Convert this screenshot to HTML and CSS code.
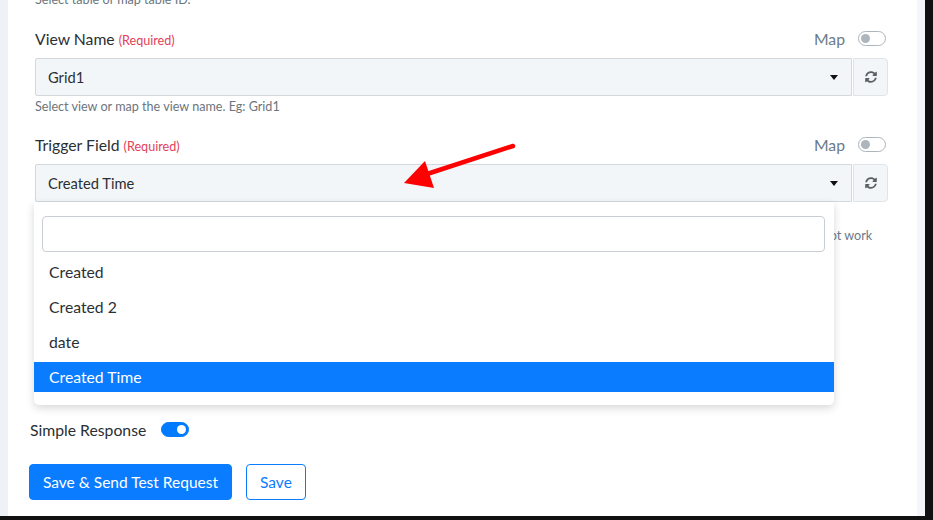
FILE: index.html
```html
<!DOCTYPE html>
<html lang="en">
<head>
  <meta charset="UTF-8" />
  <meta name="viewport" content="width=device-width, initial-scale=1.0"/>
  <title>Trigger Settings</title>
  <link rel="stylesheet" href="styles.css" />
</head>
<body>
  <div class="screen">
    <main class="panel">
      <p class="help help-top">Select table or map table ID.</p>

      <div class="fields">
        <!-- View name -->
        <div class="field">
          <div class="field-head">
            <label>View Name <span class="req">(Required)</span></label>
            <div class="map"><span>Map</span><span class="switch"></span></div>
          </div>
          <div class="select-row">
            <div class="select"><span>Grid1</span><span class="caret"></span></div>
            <button class="refresh" type="button">
              <svg viewBox="0 0 512 512" width="12" height="12"><path d="M370.72 133.28C339.458 104.008 298.888 87.962 255.848 88c-77.458.068-144.328 53.178-162.791 126.85-1.344 5.363-6.122 9.15-11.651 9.15H24.103c-7.498 0-13.194-6.807-11.807-14.176C33.933 94.924 134.813 8 256 8c66.448 0 126.791 26.136 171.315 68.685L463.03 40.97C478.149 25.851 504 36.559 504 57.941V192c0 13.255-10.745 24-24 24H345.941c-21.382 0-32.09-25.851-16.971-40.971l41.75-41.749zM32 296h134.059c21.382 0 32.090 25.851 16.971 40.971l-41.75 41.750c31.262 29.273 71.835 45.319 114.876 45.28 77.418-.07 144.315-53.144 162.787-126.849 1.344-5.363 6.122-9.15 11.651-9.15h57.304c7.498 0 13.194 6.807 11.807 14.176C478.067 417.076 377.187 504 256 504c-66.448 0-126.791-26.136-171.315-68.685L48.970 471.030C33.851 486.149 8 475.441 8 454.059V320c0-13.255 10.745-24 24-24z"/></svg>
            </button>
          </div>
          <p class="help">Select view or map the view name. Eg: Grid1</p>
        </div>

        <!-- Trigger field, list opened -->
        <div class="field field-next">
          <div class="field-head">
            <label>Trigger Field <span class="req">(Required)</span></label>
            <div class="map"><span>Map</span><span class="switch"></span></div>
          </div>
          <div class="select-row">
            <div class="select"><span>Created Time</span><span class="caret"></span></div>
            <button class="refresh" type="button">
              <svg viewBox="0 0 512 512" width="12" height="12"><path d="M370.72 133.28C339.458 104.008 298.888 87.962 255.848 88c-77.458.068-144.328 53.178-162.791 126.85-1.344 5.363-6.122 9.15-11.651 9.15H24.103c-7.498 0-13.194-6.807-11.807-14.176C33.933 94.924 134.813 8 256 8c66.448 0 126.791 26.136 171.315 68.685L463.03 40.97C478.149 25.851 504 36.559 504 57.941V192c0 13.255-10.745 24-24 24H345.941c-21.382 0-32.09-25.851-16.971-40.971l41.75-41.749zM32 296h134.059c21.382 0 32.090 25.851 16.971 40.971l-41.75 41.750c31.262 29.273 71.835 45.319 114.876 45.28 77.418-.07 144.315-53.144 162.787-126.849 1.344-5.363 6.122-9.15 11.651-9.15h57.304c7.498 0 13.194 6.807 11.807 14.176C478.067 417.076 377.187 504 256 504c-66.448 0-126.791-26.136-171.315-68.685L48.970 471.030C33.851 486.149 8 475.441 8 454.059V320c0-13.255 10.745-24 24-24z"/></svg>
            </button>

            <div class="dropdown">
              <input class="dropdown-search" type="text" />
              <ul class="options">
                <li>Created</li>
                <li>Created 2</li>
                <li>date</li>
                <li class="active">Created Time</li>
              </ul>
            </div>
          </div>
          <p class="help help-note">Select the date field to find new records. Only records with a date value in this field are picked, records without a value will not trigger, so it will not work</p>
        </div>
      </div>

      <div class="simple-row">
        <span>Simple Response</span>
        <span class="switch on"></span>
      </div>

      <div class="actions">
        <button class="btn btn-primary" type="button">Save &amp; Send Test Request</button>
        <button class="btn btn-outline" type="button">Save</button>
      </div>
    </main>
  </div>

  <!-- red pointer over the trigger field -->
  <svg class="pointer-arrow" width="933" height="520" viewBox="0 0 933 520">
    <line x1="513" y1="146" x2="424" y2="175" stroke="#ff0000" stroke-width="4.5" stroke-linecap="round" />
    <polygon points="404,183 425,161 434,188" fill="#ff0000" />
  </svg>
</body>
</html>
```

FILE: styles.css
```css
/* =====================
  Base
====================== */

body {
  margin: 0;
  background-color: #111; /* dark frame around the app */
  font-family: Lato, "Open Sans", sans-serif;
  color: #2b2f33;
  overflow: hidden;
}

.screen {
  width: 925px;
  height: 516px;
  padding: 0 8px;
  box-sizing: border-box;
  background: linear-gradient(to right, #eef1f5, #f4f6f9);
}

.panel {
  height: 100%;
  box-sizing: border-box;
  background-color: #fff;
  padding: 0 29px 0 22px;
  display: flex;
  flex-direction: column;
}

.fields {
  padding-left: 5px;
}

/* =====================
  Texts
====================== */

.help {
  margin: 3px 0 0;
  font-size: 12.6px;
  line-height: 16px;
  color: #6c757d;
  white-space: nowrap;
}

.help-top {
  margin: -8px 0 0 5px;
}

.help-note {
  margin-top: 26px;
  color: #6c7a89;
}

.field {
  margin-top: 20px;
}

.field-next {
  margin-top: 19px;
}

.field-head {
  display: flex;
  justify-content: space-between;
  align-items: center;
  height: 20px;
}

.field-head label {
  font-size: 15.75px;
  color: #2b2f33;
}

.req {
  font-size: 12.6px;
  color: #e2415a; /* red for required */
}

.map {
  display: flex;
  align-items: center;
  gap: 13px;
  margin-right: 2px;
  font-size: 15.75px;
  color: #6c7a89;
}

/* =====================
  Switches
====================== */

.switch {
  position: relative;
  display: inline-block;
  width: 28px;
  height: 15px;
  box-sizing: border-box;
  border: 1px solid #adb5bd;
  border-radius: 8px;
  background-color: #fff;
}

.switch::after {
  content: "";
  position: absolute;
  top: 2px;
  left: 2px;
  width: 9px;
  height: 9px;
  border-radius: 50%;
  background-color: #adb5bd;
}

.switch.on {
  border-color: #007bff;
  background-color: #007bff;
}

.switch.on::after {
  left: auto;
  right: 2px;
  background-color: #fff;
}

/* =====================
  Select with refresh button
====================== */

.select-row {
  position: relative;
  display: flex;
  margin-top: 10px;
  height: 38px;
}

.select {
  flex: 1;
  display: flex;
  align-items: center;
  justify-content: space-between;
  padding: 0 13px 0 12px;
  background-color: #f3f6f9;
  border: 1px solid #d3d8de;
  border-radius: 2px 0 0 2px;
  font-size: 14.7px;
  color: #2b2f33;
}

.caret {
  width: 0;
  height: 0;
  border-left: 4.5px solid transparent;
  border-right: 4.5px solid transparent;
  border-top: 5px solid #111;
}

.refresh {
  width: 35px;
  margin-left: 1px;
  padding: 0;
  display: flex;
  align-items: center;
  justify-content: center;
  background-color: #f3f6f9;
  border: 1px solid #e0e4e8;
  border-radius: 0 4px 4px 0;
}

.refresh svg {
  fill: #5a5f66;
}

/* =====================
  Opened list
====================== */

.dropdown {
  position: absolute;
  top: 38px;
  left: -1px;
  width: 800px;
  z-index: 5;
  box-sizing: border-box;
  padding: 14px 9px 13px 8px;
  background-color: #fff;
  border-radius: 0 0 5px 5px;
  box-shadow: 0 3px 8px rgba(0, 0, 0, 0.16);
}

.dropdown-search {
  display: block;
  width: 100%;
  height: 36px;
  box-sizing: border-box;
  border: 1px solid #c9ced4;
  border-radius: 4px;
  background-color: #fff;
}

.options {
  list-style: none;
  margin: 0 -9px 0 -8px;
  padding: 0;
}

.options li {
  height: 30px;
  line-height: 30px;
  margin-top: 5px;
  padding-left: 15px;
  font-size: 15.75px;
  color: #2b2f33;
}

.options li.active {
  background-color: #0a7cff;
  color: #fff;
}

/* =====================
  Bottom
====================== */

.simple-row {
  display: flex;
  align-items: center;
  gap: 15px;
  height: 20px;
  margin-top: 175px;
  font-size: 15.75px;
  color: #2b2f33;
}

.actions {
  display: flex;
  gap: 14px;
  margin: 25px 0 0 -1px;
}

.btn {
  height: 36px;
  padding: 0 13px;
  border-radius: 4px;
  font-family: Lato, "Open Sans", sans-serif;
  font-size: 15.5px;
}

.btn-primary {
  border: 1px solid #0a7cff;
  background-color: #0a7cff;
  color: #fff;
}

.btn-outline {
  border: 1px solid #0a7cff;
  background-color: #fff;
  color: #0a7cff;
}

.pointer-arrow {
  position: absolute;
  top: 0;
  left: 0;
  pointer-events: none;
  z-index: 10;
}
```
